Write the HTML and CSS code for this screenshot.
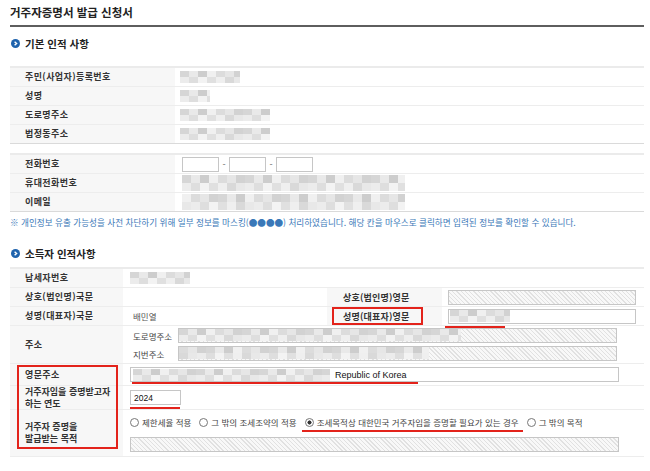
FILE: index.html
```html
<!DOCTYPE html>
<html lang="ko">
<head>
<meta charset="utf-8">
<title>거주자증명서 발급 신청서</title>
<link rel="stylesheet" href="styles.css">
</head>
<body>
<div class="page">
  <h1 class="title">거주자증명서 발급 신청서</h1>

  <h2 class="sec"><svg viewBox="0 0 9 9"><circle cx="4.5" cy="4.5" r="4.5" fill="#1f63ad"/><path d="M3.6 2.7 L5.6 4.5 L3.6 6.3" fill="none" stroke="#fff" stroke-width="1.4"/></svg>기본 인적 사항</h2>

  <div class="tbl t1">
    <div class="row"><div class="lab">주민(사업자)등록번호</div><div class="val"><span class="mz w60"></span></div></div>
    <div class="row"><div class="lab">성명</div><div class="val"><span class="mz w30"></span></div></div>
    <div class="row"><div class="lab">도로명주소</div><div class="val"><span class="mz w90"></span></div></div>
    <div class="row"><div class="lab">법정동주소</div><div class="val"><span class="mz w90"></span></div></div>
  </div>

  <div class="tbl t1 t2">
    <div class="row"><div class="lab">전화번호</div><div class="val phone"><span class="box ph"></span><span class="dash">-</span><span class="box ph"></span><span class="dash">-</span><span class="box ph"></span></div></div>
    <div class="row"><div class="lab">휴대전화번호</div><div class="val phone"><span class="mz w225 tall"></span></div></div>
    <div class="row"><div class="lab">이메일</div><div class="val phone"><span class="mz w225 tall alt"></span></div></div>
  </div>

  <p class="note">※ 개인정보 유출 가능성을 사전 차단하기 위해 일부 정보를 마스킹(●●●●) 처리하였습니다. 해당 칸을 마우스로 클릭하면 입력된 정보를 확인할 수 있습니다.</p>

  <h2 class="sec sec2"><svg viewBox="0 0 9 9"><circle cx="4.5" cy="4.5" r="4.5" fill="#1f63ad"/><path d="M3.6 2.7 L5.6 4.5 L3.6 6.3" fill="none" stroke="#fff" stroke-width="1.4"/></svg>소득자 인적사항</h2>

  <div class="tbl t3">
    <div class="row r1"><div class="lab">납세자번호</div><div class="val"><span class="mz w60"></span></div></div>
    <div class="row r2"><div class="lab">상호(법인명)국문</div><div class="val mid"></div><div class="lab2">상호(법인명)영문</div><div class="val2"><span class="box hatch en"></span></div></div>
    <div class="row r3"><div class="lab">성명(대표자)국문</div><div class="val mid"><span class="txt">배민열</span></div><div class="lab2 boxed"><span class="redlab">성명(대표자)영문</span></div><div class="val2"><span class="iw"><span class="box en"><span class="mz w60"></span></span><span class="uline u1"></span></span></div></div>
    <div class="row r4"><div class="lab">주소</div><div class="val addr">
      <div class="aline"><span class="sub">도로명주소</span><span class="box hatch long"><span class="mz w280"></span></span></div>
      <div class="aline"><span class="sub">지번주소</span><span class="box hatch long"><span class="mz w250 alt"></span></span></div>
    </div></div>
    <div class="row r5"><div class="lab">영문주소</div><div class="val"><span class="iw"><span class="box full"><span class="mz w197"></span><span class="eng">Republic of Korea</span></span><span class="uline u2"></span></span></div></div>
    <div class="row r6"><div class="lab">거주자임을 증명받고자<br>하는 연도</div><div class="val"><span class="iw"><span class="box year">2024</span><span class="uline u3"></span></span></div></div>
    <div class="row r7"><div class="lab">거주자 증명을<br>발급받는 목적</div><div class="val purpose">
      <div class="radios">
        <span class="opt"><span class="rd"></span>제한세율 적용</span>
        <span class="opt"><span class="rd"></span>그 밖의 조세조약의 적용</span>
        <span class="opt iw"><span class="rd on"></span>조세목적상 대한민국 거주자임을 증명할 필요가 있는 경우<span class="uline u4"></span></span>
        <span class="opt"><span class="rd"></span>그 밖의 목적</span>
      </div>
      <span class="box hatch full"></span>
    </div></div>
    <div class="redbox"></div>
  </div>
</div>
</body>
</html>
```
FILE: styles.css
```css
* { box-sizing: border-box; }
body {
  margin: 0;
  background: #fff;
  font-family: "Noto Sans CJK KR", "Noto Sans", sans-serif;
  color: #333;
}
.page { width: 650px; padding: 0 6px 0 10px; }

.title {
  margin: 0;
  height: 27px;
  line-height: 25px;
  font-size: 11.5px;
  font-weight: bold;
  color: #222;
  border-bottom: 2px solid #5e5e5e;
}

.sec {
  margin: 4px 0 0;
  height: 24px;
  display: flex;
  align-items: center;
  gap: 5px;
  padding-left: 1px;
  font-size: 10.5px;
  font-weight: bold;
  color: #222;
}
.sec svg { width: 9px; height: 9px; flex: none; }
.sec2 { margin-top: 9px; }

.tbl { border-top: 2px solid #ebebeb; }
.t1 { margin-top: 11px; }
.t2 { margin-top: 9px; }
.row {
  display: flex;
  height: 19px;
  border-bottom: 1px solid #ededed;
}
.row:last-of-type { border-bottom-color: #dadada; }
.lab {
  width: 165px;
  flex: none;
  background: #f7f7f7;
  padding-left: 15px;
  font-size: 9px;
  font-weight: bold;
  color: #333;
  display: flex;
  align-items: center;
  line-height: 12px;
  letter-spacing: 0.4px;
}
.val {
  flex: 1;
  display: flex;
  align-items: center;
  padding-left: 5px;
  font-size: 9px;
}
.phone { padding-left: 7px; }

.box {
  display: inline-flex;
  align-items: center;
  height: 15px;
  border: 1px solid #c6c6c6;
  background: #fff;
}
.ph { width: 37px; }
.dash { width: 10px; text-align: center; font-size: 9px; color: #666; }

.mz {
  display: inline-block;
  height: 12px;
  background-image:
    linear-gradient(90deg, #d6d6d6 0 9px, #e9e9e9 9px 18px, #cdcdcd 18px 27px, #f0f0f0 27px 36px, #dcdcdc 36px 45px, #e6e6e6 45px 54px, #d2d2d2 54px 63px),
    linear-gradient(90deg, #ececec 0 9px, #dedede 9px 18px, #f3f3f3 18px 27px, #e0e0e0 27px 36px, #efefef 36px 45px, #d9d9d9 45px 54px, #e8e8e8 54px 63px);
  background-size: 63px 6px, 63px 6px;
  background-position: 0 0, 0 6px;
  background-repeat: repeat-x;
}
.mz.alt { background-position: 27px 0, 18px 6px; }
.mz.tall { height: 16px; background-size: 63px 8px, 63px 8px; background-position: 0 0, 0 8px; }
.mz.tall.alt { background-position: 36px 0, 9px 8px; }
.w30 { width: 30px; }
.w60 { width: 60px; }
.w90 { width: 90px; }
.w197 { width: 197px; }
.w225 { width: 223px; }
.w250 { width: 250px; }
.w280 { width: 282px; }

.note {
  margin: 0;
  height: 20px;
  line-height: 20px;
  font-size: 8.6px;
  color: #3a78b8;
  white-space: nowrap;
}

.t3 { margin-top: 2px; position: relative; }
.t3 .lab { width: 113px; padding-left: 15px; }
.t3 .val { padding-left: 7px; }
.t3 .r1 { height: 19px; }
.t3 .r2 { height: 19px; }
.t3 .r3 { height: 19px; }
.t3 .r4 { height: 38px; }
.t3 .r5 { height: 22px; }
.t3 .r6 { height: 24px; }
.t3 .r7 { height: 47px; }
.t3 .r6 .lab, .t3 .r7 .lab { letter-spacing: 0; }
.t3 .val.mid { flex: none; width: 204px; }
.lab2 {
  width: 115px;
  flex: none;
  background: #f7f7f7;
  padding-left: 16px;
  font-size: 9px;
  font-weight: bold;
  display: flex;
  align-items: center;
  letter-spacing: 0.2px;
}
.lab2.boxed { padding-left: 5px; }
.redlab {
  display: inline-flex;
  align-items: center;
  height: 18px;
  width: 91px;
  padding-left: 9px;
  border: 2px solid #e3231b;
}
.val2 { flex: 1; display: flex; align-items: center; padding-left: 6px; }
.en { width: 188px; padding-left: 1px; }
.txt { margin-left: 3px; color: #555; font-size: 8.5px; }

.hatch {
  background: repeating-linear-gradient(45deg, #f8f8f8 0 2px, #e1e1e1 2px 3px);
}

.addr { flex-direction: column; align-items: flex-start; justify-content: center; gap: 3px; }
.aline { display: flex; align-items: center; height: 15px; }
.sub { width: 48px; padding-left: 3px; font-size: 8.5px; color: #444; }
.long { width: 439px; padding: 0; }
.long .mz { height: 13px; }

.full { width: 489px; }
.box.full .mz { margin-left: 2px; }
.eng {
  margin-left: 5px;
  font-family: "Liberation Sans", Arial, sans-serif;
  font-size: 9px;
  color: #111;
}
.year {
  width: 51px;
  padding-left: 3px;
  font-family: "Liberation Sans", Arial, sans-serif;
  font-size: 8.5px;
  color: #111;
}

.iw { position: relative; display: inline-flex; align-items: center; }
.uline { position: absolute; height: 2px; background: #e3231b; }
.u1 { left: -3px; top: 17px; width: 60px; }
.u2 { left: 2px; top: 15px; width: 286px; }
.u3 { left: 0; top: 17px; width: 50px; }
.u4 { left: -3px; top: 14px; width: 221px; }

.purpose { flex-direction: column; align-items: flex-start; justify-content: flex-start; padding-top: 4px; }
.radios { display: flex; align-items: center; height: 16px; gap: 8px; font-size: 8.5px; color: #444; }
.opt { display: inline-flex; align-items: center; gap: 3px; white-space: nowrap; }
.rd {
  width: 9px;
  height: 9px;
  border: 1px solid #777;
  border-radius: 50%;
  background: #fff;
  flex: none;
}
.rd.on { background: radial-gradient(circle, #333 0 1.8px, #fff 2.3px); }
.purpose .hatch { margin-top: 7px; }

.redbox {
  position: absolute;
  left: 7px;
  top: 96px;
  width: 101px;
  height: 84px;
  border: 2px solid #e3231b;
}
```
